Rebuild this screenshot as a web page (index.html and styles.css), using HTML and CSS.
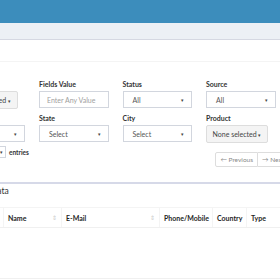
FILE: index.html
```html
<!DOCTYPE html>
<html lang="en">
<head>
  <meta charset="UTF-8">
  <title>Leads</title>
  <link rel="stylesheet" href="styles.css">
</head>
<body>
  <header class="topbar"></header>
  <div class="subbar"></div>

  <div class="box">
    <div class="box-header"></div>

    <div class="filters">
      <div class="field">
        <label class="field-label">&nbsp;</label>
        <button class="multi-btn">None selected <span class="caret">▾</span></button>
      </div>
      <div class="field">
        <label class="field-label">Fields Value</label>
        <input class="control" type="text" placeholder="Enter Any Value">
      </div>
      <div class="field">
        <label class="field-label">Status</label>
        <div class="control select">All <span class="arrow">▾</span></div>
      </div>
      <div class="field">
        <label class="field-label">Source</label>
        <div class="control select">All <span class="arrow">▾</span></div>
      </div>

      <div class="field">
        <label class="field-label">&nbsp;</label>
        <div class="control select">Select <span class="arrow">▾</span></div>
      </div>
      <div class="field">
        <label class="field-label">State</label>
        <div class="control select">Select <span class="arrow">▾</span></div>
      </div>
      <div class="field">
        <label class="field-label">City</label>
        <div class="control select">Select <span class="arrow">▾</span></div>
      </div>
      <div class="field">
        <label class="field-label">Product</label>
        <button class="multi-btn">None selected <span class="caret">▾</span></button>
      </div>
    </div>

    <div class="table-tools">
      <div class="length">
        <span class="length-select">10 <span class="arrow">▾</span></span>
        <span>entries</span>
      </div>
      <div class="pager">
        <span class="page-btn">← Previous</span>
        <span class="page-btn">→ Next</span>
      </div>
    </div>
  </div>

  <div class="box data-box">
    <div class="data-title">Data</div>
    <table class="leads">
      <colgroup>
        <col style="width:30px">
        <col style="width:58px">
        <col style="width:98px">
        <col style="width:53px">
        <col style="width:34px">
        <col style="width:60px">
      </colgroup>
      <thead>
        <tr>
          <th></th>
          <th>Name <span class="sort">⇕</span></th>
          <th>E-Mail <span class="sort">⇕</span></th>
          <th>Phone/Mobile</th>
          <th>Country</th>
          <th>Type</th>
        </tr>
      </thead>
      <tbody>
        <tr><td colspan="6"></td></tr>
      </tbody>
    </table>
  </div>
</body>
</html>
```

FILE: styles.css
```css
body {
  margin: 0;
  font-family: Lato, "Liberation Sans", sans-serif;
  font-size: 7px;
  color: #333;
  background: #fff;
  overflow: hidden;
  width: 280px;
  height: 280px;
}
.topbar {
  height: 23px;
  background: #3c8dbc;
}
.subbar {
  height: 16px;
  background: #ecf0f5;
  border-bottom: 1px solid #d5d8e2;
}
.box-header {
  height: 21px;
  border-bottom: 1px solid #f4f4f4;
}
.filters {
  display: grid;
  grid-template-columns: repeat(4, 69.5px);
  column-gap: 14px;
  row-gap: 5px;
  margin: 18px 0 0 -44.5px;
}
.field {
  display: flex;
  flex-direction: column;
}
.field-label {
  font-weight: bold;
  font-size: 7px;
  line-height: 9px;
  height: 9px;
  margin-bottom: 2px;
  white-space: nowrap;
}
.control {
  box-sizing: border-box;
  height: 17px;
  border: 1px solid #d2d6de;
  padding: 0 7px;
  font-family: inherit;
  font-size: 7px;
  color: #555;
  background: #fff;
  outline: none;
}
.control::placeholder { color: #a0a0a0; }
.select {
  display: flex;
  align-items: center;
  justify-content: space-between;
  padding-left: 9px;
}
.arrow {
  font-size: 5px;
  color: #444;
}
.multi-btn {
  box-sizing: border-box;
  width: 62px;
  height: 18px;
  border: 1px solid #ddd;
  border-radius: 2px;
  background: #f4f4f4;
  color: #444;
  font-family: inherit;
  font-size: 7px;
  padding: 0;
  text-align: center;
}
.caret { font-size: 5px; }
.table-tools {
  display: flex;
  justify-content: space-between;
  align-items: flex-start;
  margin-top: 3px;
  height: 36px;
}
.length {
  display: flex;
  align-items: center;
  gap: 3px;
  font-weight: bold;
  font-size: 6.5px;
  margin-left: -20px;
}
.length-select {
  box-sizing: border-box;
  width: 26px;
  height: 12px;
  border: 1px solid #d2d6de;
  display: flex;
  align-items: center;
  justify-content: space-between;
  padding: 0 2px;
  color: #555;
  font-weight: normal;
}
.pager {
  display: flex;
  margin-top: 6px;
  margin-right: -9px;
}
.page-btn {
  box-sizing: border-box;
  height: 15px;
  line-height: 13px;
  padding: 0 4px;
  border: 1px solid #ddd;
  color: #8a8a8a;
  font-size: 6.5px;
  white-space: nowrap;
}
.page-btn + .page-btn { border-left: none; }
.page-btn:first-child { border-radius: 2px 0 0 2px; }
.data-box {
  border-top: 2px solid #d6d9e8;
}
.data-title {
  height: 23px;
  line-height: 15px;
  font-size: 8.5px;
  margin-left: -9px;
  border-bottom: 1px solid #f4f4f4;
}
.leads {
  table-layout: fixed;
  border-collapse: collapse;
  margin-left: -27px;
  width: 333px;
}
.leads th {
  height: 19px;
  padding: 0 4px;
  text-align: left;
  font-weight: bold;
  font-size: 7px;
  color: #1f1f1f;
  border-left: 1px solid #f4f4f4;
  border-bottom: 1px solid #f0f0f0;
  white-space: nowrap;
  overflow: hidden;
}
.sort {
  float: right;
  color: #ccc;
  font-weight: normal;
  font-size: 6px;
}
.leads td {
  height: 48px;
  border-bottom: 1px solid #f0f0f0;
}
```
